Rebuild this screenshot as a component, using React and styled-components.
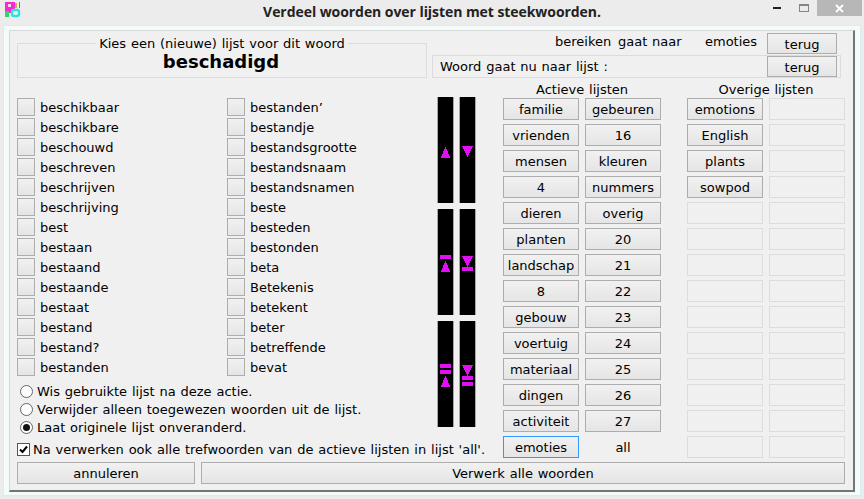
import React from "react";
import styled, { createGlobalStyle } from "styled-components";

const GlobalStyle = createGlobalStyle`
	html, body {
		margin: 0;
		padding: 0;
		background: #ececec;
	}
	* {
		box-sizing: border-box;
	}
`;

const WORDS = [
	["beschikbaar", "bestanden’"],
	["beschikbare", "bestandje"],
	["beschouwd", "bestandsgrootte"],
	["beschreven", "bestandsnaam"],
	["beschrijven", "bestandsnamen"],
	["beschrijving", "beste"],
	["best", "besteden"],
	["bestaan", "bestonden"],
	["bestaand", "beta"],
	["bestaande", "Betekenis"],
	["bestaat", "betekent"],
	["bestand", "beter"],
	["bestand?", "betreffende"],
	["bestanden", "bevat"],
];

const ACTIVE = [
	["familie", "gebeuren"],
	["vrienden", "16"],
	["mensen", "kleuren"],
	["4", "nummers"],
	["dieren", "overig"],
	["planten", "20"],
	["landschap", "21"],
	["8", "22"],
	["gebouw", "23"],
	["voertuig", "24"],
	["materiaal", "25"],
	["dingen", "26"],
	["activiteit", "27"],
];

const OTHER = ["emotions", "English", "plants", "sowpod"];

const Window = styled.div`
	width: 864px;
	height: 499px;
	overflow: hidden;
	display: flex;
	flex-direction: column;
	background: #ececec;
	color: #000;
	font-family: "DejaVu Sans", Verdana, sans-serif;
	font-size: 13px;
	word-spacing: 0.7px;
`;

const TitleBar = styled.div`
	position: relative;
	flex: none;
	height: 25px;
	display: flex;
	align-items: center;
	justify-content: center;
`;

const Title = styled.div`
	font-family: "Open Sans", sans-serif;
	font-weight: 700;
	font-size: 14px;
	letter-spacing: -0.06px;
	word-spacing: 0;
	color: #222;
	margin-top: -2px;
`;

const AppIcon = styled.svg`
	position: absolute;
	left: 5px;
	top: 2px;
`;

const Controls = styled.div`
	position: absolute;
	right: 2px;
	top: 0;
	display: flex;
`;

const Control = styled.div`
	height: 16px;
	width: ${({ $wide }) => ($wide ? "45px" : "27px")};
	display: flex;
	align-items: center;
	justify-content: center;
	background: ${({ $wide }) => ($wide ? "#b7b7b7" : "transparent")};
`;

const Frame = styled.div`
	flex: none;
	width: 858px;
	height: 471px;
	margin-left: 3px;
	padding: 4px 5px 3px 5px;
	background: #f4fbfb;
	border: 1px solid #d5eeee;
`;

const Panel = styled.div`
	height: 100%;
	padding: 2px 8px 0 7px;
	background: #f0f0f0;
	border-style: solid;
	border-width: 1px 2px 2px 1px;
	border-color: #d8d8d8 #6f7673 #6f7673 #d8d8d8;
`;

const TopRow = styled.div`
	height: 45px;
	display: flex;
	justify-content: space-between;
`;

const GroupBox = styled.div`
	position: relative;
	width: 410px;
	height: 35px;
	margin-top: 10px;
	border: 1px solid #dcdcdc;
	display: flex;
	justify-content: center;
`;

const Legend = styled.span`
	position: absolute;
	top: -8px;
	left: 50%;
	transform: translateX(-50%);
	padding: 0 3px;
	background: #f0f0f0;
	white-space: nowrap;
	line-height: 15px;
`;

const WordHeading = styled.div`
	font-size: 18px;
	font-weight: 700;
	line-height: 22px;
	margin: 7px 2px 0 0;
`;

const TopRight = styled.div`
	width: 409px;
	margin-right: 4px;
`;

const TargetRow = styled.div`
	height: 22px;
	display: flex;
	align-items: flex-start;
`;

const TargetLabel = styled.span`
	width: ${({ $width }) => $width}px;
	flex: none;
	line-height: 17px;
`;

const CurrentBox = styled.div`
	height: 23px;
	display: flex;
	align-items: center;
	justify-content: space-between;
	padding: 0 3px 0 7px;
	border: 1px solid #dcdcdc;
`;

const Button = styled.div`
	flex: none;
	width: ${({ $width }) => $width || "100%"};
	height: ${({ $height }) => $height || 22}px;
	display: flex;
	align-items: center;
	justify-content: center;
	white-space: nowrap;
	border: 1px solid ${({ $focused }) => ($focused ? "#3399ff" : "#adadad")};
	background: linear-gradient(#f1f1f1, #e5e5e5);
`;

const BackButton = styled(Button)`
	width: 70px;
	height: 21px;
	padding-top: 1px;
`;

const EmptyButton = styled.div`
	height: 22px;
	border: 1px solid #dcdcdc;
	background: #f0f0f0;
`;

const PlainCell = styled.div`
	height: 22px;
	display: flex;
	align-items: center;
	justify-content: center;
`;

const Main = styled.div`
	display: flex;
	height: 384px;
	margin-top: 4px;
`;

const LeftColumn = styled.div`
	width: 420px;
	flex: none;
	padding-top: 16px;
`;

const WordGrid = styled.div`
	display: grid;
	grid-template-columns: 210px 200px;
	grid-auto-rows: 20px;
`;

const WordItem = styled.div`
	display: flex;
	align-items: center;
	gap: 5px;
`;

const WordBox = styled.div`
	width: 18px;
	height: 18px;
	margin-bottom: 2px;
	border: 1px solid #adadad;
	background: linear-gradient(#f1f1f1, #e5e5e5);
`;

const WordLabel = styled.span`
	margin-bottom: 1px;
`;

const RadioGroup = styled.div`
	margin-top: 4px;
	padding-left: 3px;
	display: flex;
	flex-direction: column;
`;

const RadioRow = styled.div`
	height: 18px;
	display: flex;
	align-items: center;
	gap: 4px;
`;

const Radio = styled.div`
	width: 13px;
	height: 13px;
	border-radius: 50%;
	border: 1px solid #666;
	background: #fff;
	display: flex;
	align-items: center;
	justify-content: center;
	&::after {
		content: "";
		display: ${({ $checked }) => ($checked ? "block" : "none")};
		width: 7px;
		height: 7px;
		border-radius: 50%;
		background: #111;
	}
`;

const CheckRow = styled.div`
	margin-top: 5px;
	height: 17px;
	display: flex;
	align-items: center;
	gap: 3px;
	white-space: nowrap;
`;

const CheckBox = styled.div`
	width: 13px;
	height: 13px;
	border: 1px solid #555;
	background: #fff;
	display: flex;
	align-items: center;
	justify-content: center;
`;

const BarColumn = styled.div`
	width: 66px;
	flex: none;
	padding-top: 15px;
	display: flex;
	flex-direction: column;
	gap: 6px;
`;

const BarPair = styled.div`
	display: flex;
	gap: 5px;
`;

const Bar = styled.div`
	width: 17px;
	height: 106px;
	padding-top: ${({ $shift }) => $shift}px;
	background: #000;
	border-left: 1px solid #a8a8a8;
	border-right: 1px solid #a8a8a8;
	display: flex;
	align-items: center;
	justify-content: center;
`;

const Lists = styled.div`
	width: 342px;
	flex: none;
	display: flex;
	flex-direction: column;
`;

const ListHeads = styled.div`
	height: 16px;
	display: grid;
	grid-template-columns: 158px 158px;
	column-gap: 26px;
	line-height: 15px;
	text-align: center;
`;

const ListColumns = styled.div`
	display: grid;
	grid-template-columns: 158px 158px;
	column-gap: 26px;
`;

const ButtonGrid = styled.div`
	display: grid;
	grid-template-columns: 76px 76px;
	grid-auto-rows: 22px;
	column-gap: 6px;
	row-gap: 4px;
`;

const BottomRow = styled.div`
	display: flex;
	gap: 6px;
	margin-top: -4px;
`;

const MAGENTA = "#df10f2";

// Stack of bars with an arrow: bars sit on top of an up arrow, below a down arrow.
const ArrowIcon = ({ dir, bars }) => {
	const up = dir === "up";
	const height = 11 + bars * 6;
	const top = up ? bars * 6 : 0;
	const rectYs = Array.from({ length: bars }, (_, i) =>
		up ? i * 6 : 11 + i * 6
	);
	const points = up
		? `5.5,${top} 10.5,${top + 11} 0.5,${top + 11}`
		: `0,0 11,0 5.5,11`;
	return (
		<svg
			width="11"
			height={height}
			viewBox={`0 0 11 ${height}`}
			shapeRendering="crispEdges"
		>
			{rectYs.map((y) => (
				<rect key={y} x="0" y={y} width="11" height="4" fill={MAGENTA} />
			))}
			<polygon points={points} fill={MAGENTA} />
		</svg>
	);
};

const App = () => (
	<Window>
		<GlobalStyle />
		<TitleBar>
			<AppIcon width="16" height="16" viewBox="0 0 16 16">
				<rect x="0" y="0" width="10" height="11" fill="#f42ccf" />
				<rect x="3" y="2" width="3" height="3" fill="#f7d9f0" />
				<rect x="10" y="1" width="2" height="5" fill="#d9a53a" />
				<rect x="14" y="0" width="1" height="6" fill="#5a6fe0" />
				<rect x="0" y="9" width="4" height="6" fill="#2fd36a" />
				<rect x="7" y="8" width="7" height="6" rx="2" fill="#e8fbfa" stroke="#27e6d8" strokeWidth="2.4" />
			</AppIcon>
			<Title>Verdeel woorden over lijsten met steekwoorden.</Title>
			<Controls>
				<Control>
					<svg width="8" height="2" viewBox="0 0 8 2">
						<rect width="8" height="2" fill="#222" />
					</svg>
				</Control>
				<Control>
					<svg width="10" height="8" viewBox="0 0 10 8">
						<rect x="0.5" y="0.5" width="9" height="7" fill="none" stroke="#858585" />
						<rect x="0" y="0" width="10" height="2" fill="#858585" />
					</svg>
				</Control>
				<Control $wide>
					<svg width="9" height="9" viewBox="0 0 9 9">
						<path d="M1 1L8 8M8 1L1 8" stroke="#fff" strokeWidth="1.8" />
					</svg>
				</Control>
			</Controls>
		</TitleBar>
		<Frame>
			<Panel>
				<TopRow>
					<GroupBox>
						<Legend>Kies een (nieuwe) lijst voor dit woord</Legend>
						<WordHeading>beschadigd</WordHeading>
					</GroupBox>
					<TopRight>
						<TargetRow>
							<TargetLabel $width={123} />
							<TargetLabel $width={63}>bereiken</TargetLabel>
							<TargetLabel $width={87}>gaat naar</TargetLabel>
							<TargetLabel $width={62}>emoties</TargetLabel>
							<BackButton>terug</BackButton>
						</TargetRow>
						<CurrentBox>
							<span>Woord gaat nu naar lijst :</span>
							<BackButton>terug</BackButton>
						</CurrentBox>
					</TopRight>
				</TopRow>
				<Main>
					<LeftColumn>
						<WordGrid>
							{WORDS.flat().map((word) => (
								<WordItem key={word}>
									<WordBox />
									<WordLabel>{word}</WordLabel>
								</WordItem>
							))}
						</WordGrid>
						<RadioGroup>
							<RadioRow>
								<Radio />
								<span>Wis gebruikte lijst na deze actie.</span>
							</RadioRow>
							<RadioRow>
								<Radio />
								<span>Verwijder alleen toegewezen woorden uit de lijst.</span>
							</RadioRow>
							<RadioRow>
								<Radio $checked />
								<span>Laat originele lijst onveranderd.</span>
							</RadioRow>
						</RadioGroup>
						<CheckRow>
							<CheckBox>
								<svg width="11" height="11" viewBox="0 0 11 11">
									<path d="M2 5.5L4.5 8L9 2.5" fill="none" stroke="#000" strokeWidth="2" />
								</svg>
							</CheckBox>
							<span>Na verwerken ook alle trefwoorden van de actieve lijsten in lijst 'all'.</span>
						</CheckRow>
					</LeftColumn>
					<BarColumn>
						{[0, 1, 2].map((bars) => (
							<BarPair key={bars}>
								<Bar $shift={bars === 0 ? 4 : 3}>
									<ArrowIcon dir="up" bars={bars} />
								</Bar>
								<Bar $shift={bars === 0 ? 3 : 5}>
									<ArrowIcon dir="down" bars={bars} />
								</Bar>
							</BarPair>
						))}
					</BarColumn>
					<Lists>
						<ListHeads>
							<span>Actieve lijsten</span>
							<span>Overige lijsten</span>
						</ListHeads>
						<ListColumns>
							<ButtonGrid>
								{ACTIVE.flat().map((name) => (
									<Button key={name}>{name}</Button>
								))}
								<Button $focused>emoties</Button>
								<PlainCell>all</PlainCell>
							</ButtonGrid>
							<ButtonGrid>
								{Array.from({ length: 28 }, (_, i) => {
									const name = i % 2 === 0 ? OTHER[i / 2] : null;
									return name ? (
										<Button key={i}>{name}</Button>
									) : (
										<EmptyButton key={i} />
									);
								})}
							</ButtonGrid>
						</ListColumns>
					</Lists>
				</Main>
				<BottomRow>
					<Button $width="178px">annuleren</Button>
					<Button $width="644px">Verwerk alle woorden</Button>
				</BottomRow>
			</Panel>
		</Frame>
	</Window>
);

export default App;
